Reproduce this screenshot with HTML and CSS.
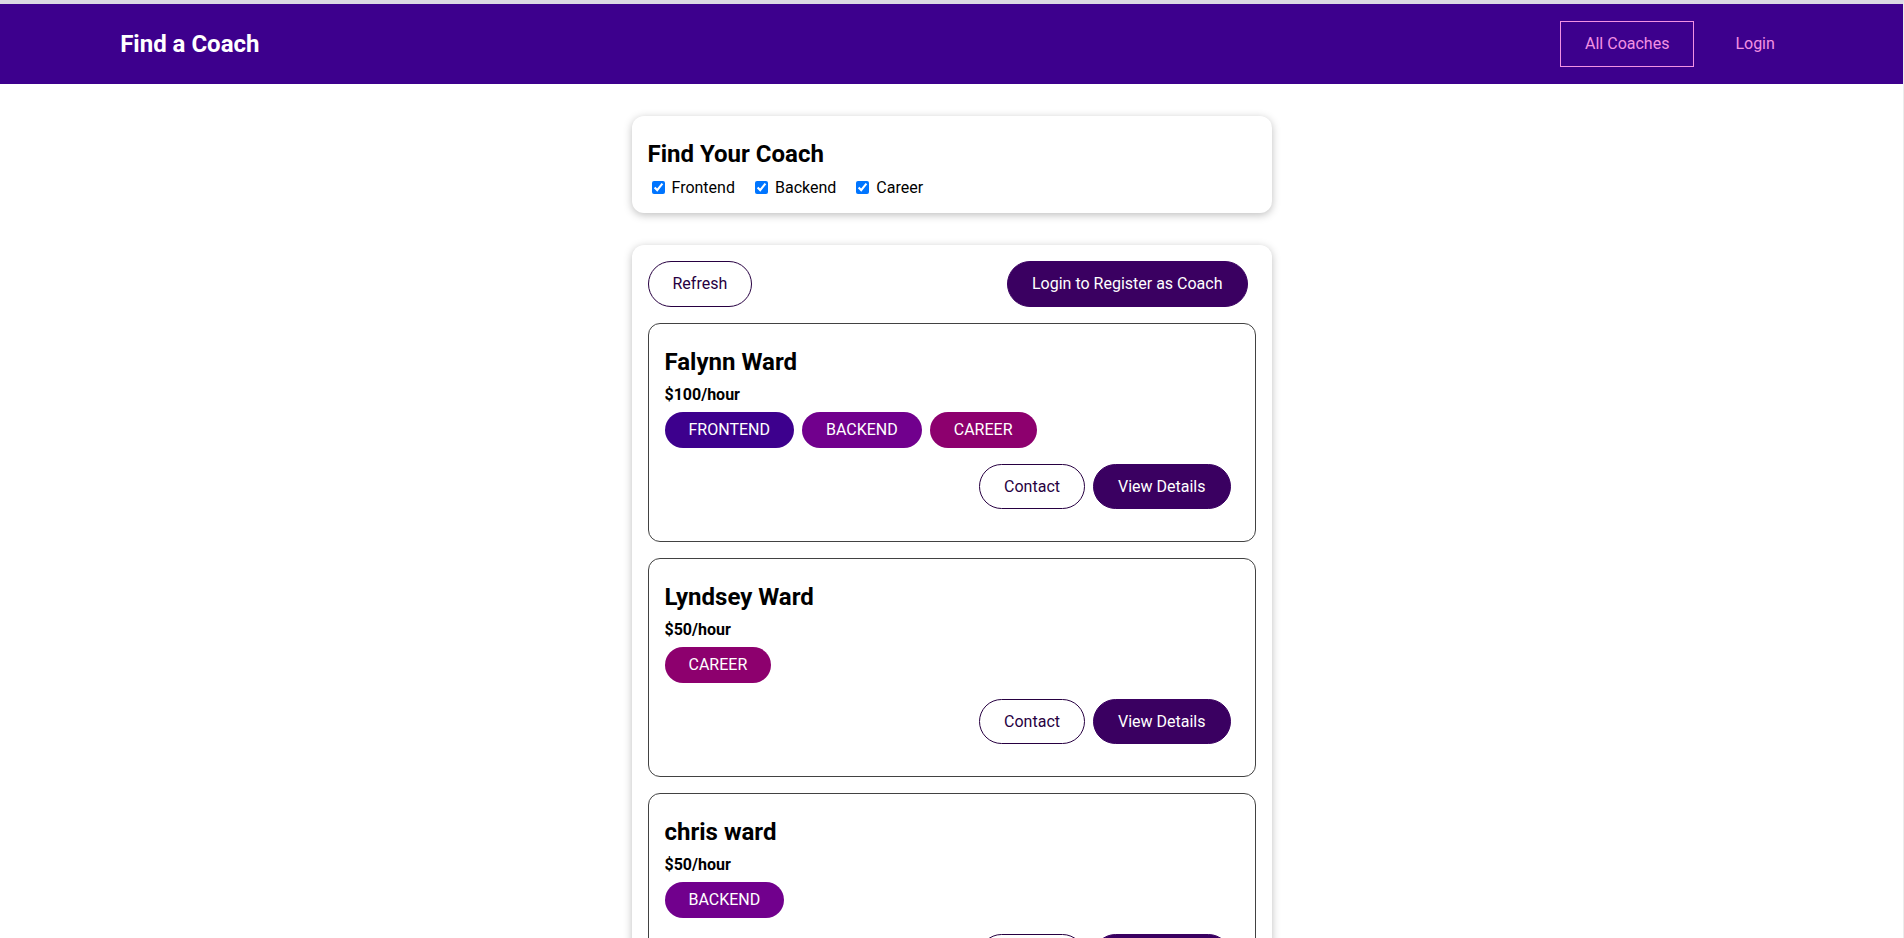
FILE: index.html
```html
<!DOCTYPE html>
<html lang="en">
<head>
<meta charset="utf-8">
<title>Find a Coach</title>
<link rel="stylesheet" href="styles.css">
</head>
<body>
<header class="site-header">
  <nav class="site-nav">
    <h1 class="brand"><a class="brand-link" href="#">Find a Coach</a></h1>
    <ul class="nav-list">
      <li class="nav-item"><a class="nav-link active" href="#">All Coaches</a></li>
      <li class="nav-item"><a class="nav-link" href="#">Login</a></li>
    </ul>
  </nav>
</header>
<main>
  <section>
    <div class="card">
      <h2 class="filter-title">Find Your Coach</h2>
      <span class="filter-option"><input type="checkbox" id="frontend" checked><label for="frontend">Frontend</label></span><span class="filter-option"><input type="checkbox" id="backend" checked><label for="backend">Backend</label></span><span class="filter-option"><input type="checkbox" id="career" checked><label for="career">Career</label></span>
    </div>
  </section>
  <section>
    <div class="card">
      <div class="controls">
        <button class="btn outline">Refresh</button>
        <a class="btn" href="#">Login to Register as Coach</a>
      </div>
      <ul class="coach-list">
        <li class="coach">
          <h3 class="coach-name">Falynn Ward</h3>
          <h4 class="coach-rate">$100/hour</h4>
          <div class="badges"><span class="badge frontend">FRONTEND</span><span class="badge backend">BACKEND</span><span class="badge career">CAREER</span></div>
          <div class="actions"><a class="btn outline" href="#">Contact</a><a class="btn" href="#">View Details</a></div>
        </li>
        <li class="coach">
          <h3 class="coach-name">Lyndsey Ward</h3>
          <h4 class="coach-rate">$50/hour</h4>
          <div class="badges"><span class="badge career">CAREER</span></div>
          <div class="actions"><a class="btn outline" href="#">Contact</a><a class="btn" href="#">View Details</a></div>
        </li>
        <li class="coach">
          <h3 class="coach-name">chris ward</h3>
          <h4 class="coach-rate">$50/hour</h4>
          <div class="badges"><span class="badge backend">BACKEND</span></div>
          <div class="actions"><a class="btn outline" href="#">Contact</a><a class="btn" href="#">View Details</a></div>
        </li>
      </ul>
    </div>
  </section>
</main>
</body>
</html>
```
FILE: styles.css
```css
* { box-sizing: border-box; }
html { font-family: Roboto, "Liberation Sans", sans-serif; line-height: 1.21; }
body {
  margin: 0;
  border-top: 4px solid #dcd9e4;
  border-right: 1px solid #ececec;
  min-height: 100vh;
}
.site-header {
  width: 100%;
  height: 5rem;
  background-color: #3d008d;
  display: flex;
  justify-content: center;
  align-items: center;
}
.site-nav {
  width: 90%;
  margin: auto;
  display: flex;
  justify-content: space-between;
  align-items: center;
}
.brand { margin: 0; font-size: 1.5rem; }
.brand-link {
  color: #fff;
  text-decoration: none;
  display: inline-block;
  padding: 0.8rem 1.5rem 0.7rem;
  border: 1px solid transparent;
}
.nav-list {
  list-style: none;
  margin: 0;
  padding: 0;
  display: flex;
  justify-content: center;
  align-items: center;
}
.nav-item { margin: 0 0.5rem; }
.nav-link {
  text-decoration: none;
  color: #f391e3;
  display: inline-block;
  padding: 0.75rem 1.5rem;
  border: 1px solid transparent;
}
.nav-link.active { border-color: #f391e3; }
.card {
  border-radius: 12px;
  box-shadow: 0 2px 8px rgba(0,0,0,0.26);
  padding: 1rem;
  margin: 2rem auto;
  max-width: 40rem;
  background: #fff;
}
.filter-title { margin: 0.5rem 0; font-size: 1.5rem; }
.filter-option { margin-right: 1rem; }
.filter-option input, .filter-option label { vertical-align: middle; }
.filter-option label { margin-left: 0.25rem; }
.controls { display: flex; justify-content: space-between; }
.btn {
  text-decoration: none;
  padding: 0.75rem 1.5rem;
  font: inherit;
  background-color: #3a0061;
  border: 1px solid #3a0061;
  color: #fff;
  cursor: pointer;
  border-radius: 30px;
  margin-right: 0.5rem;
  display: inline-block;
}
.btn.outline {
  background-color: transparent;
  border-color: #270041;
  color: #270041;
}
.coach-list { list-style: none; margin: 0; padding: 0; }
.coach {
  margin: 1rem 0;
  border: 1px solid #424242;
  border-radius: 12px;
  padding: 1rem;
}
.coach-name { font-size: 1.5rem; margin: 0.5rem 0; }
.coach-rate { margin: 0.5rem 0; }
.badges { margin: 0.5rem 0; }
.actions { margin: 1rem 0; display: flex; justify-content: flex-end; }
.badge {
  border-radius: 30px;
  padding: 0.5rem 1.5rem;
  display: inline-block;
  margin-right: 0.5rem;
  color: #fff;
}
.frontend { background-color: #3d008d; }
.backend { background-color: #71008d; }
.career { background-color: #8d006e; }
```
